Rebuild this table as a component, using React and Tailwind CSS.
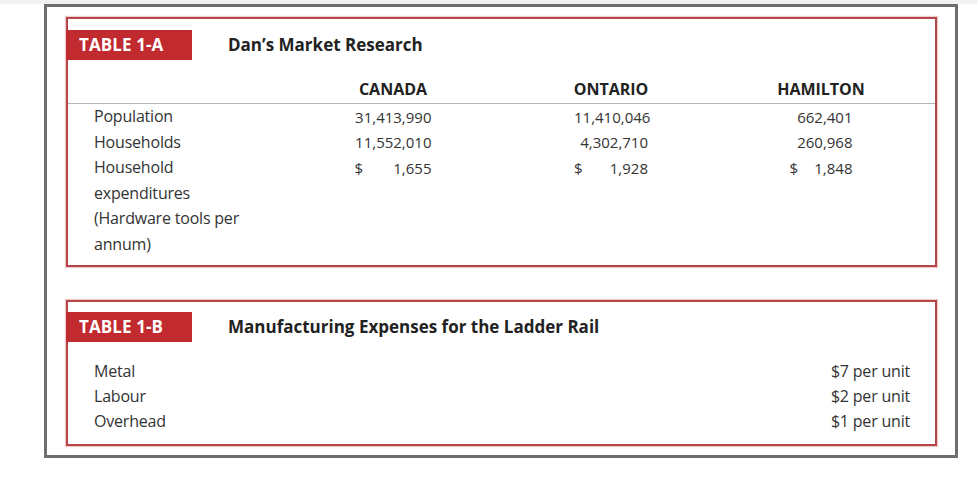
import React from "react";

const canada = [
  { v: "31,413,990" },
  { v: "11,552,010" },
  { d: true, v: "1,655" },
];
const ontario = [
  { v: "11,410,046" },
  { v: "4,302,710" },
  { d: true, v: "1,928" },
];
const hamilton = [
  { v: "662,401" },
  { v: "260,968" },
  { d: true, v: "1,848" },
];

function Badge({ children }) {
  return (
    <div className="-ml-[2px] flex h-[30px] w-[126px] items-center bg-[#c12a2e] pl-[13px] text-[17px] font-bold tracking-[0.1px] text-white">
      {children}
    </div>
  );
}

function ValueCol({ width, boxWidth, items }) {
  return (
    <div className="flex flex-col items-center" style={{ width }}>
      {items.map((it, i) => (
        <div key={i} className="flex h-[25.5px] items-center justify-between" style={{ width: boxWidth }}>
          {it.d ? <span>$</span> : <span />}
          <span>{it.v}</span>
        </div>
      ))}
    </div>
  );
}

export default function App() {
  return (
    <div
      className="h-[485px] w-[977px] overflow-hidden bg-white"
      style={{ fontFamily: "'Open Sans', 'Noto Sans', sans-serif" }}
    >
      <div className="h-[4px] w-full bg-[#f2f2f2]" />
      <div className="ml-[44px] h-[454px] w-[914px] border-[3px] border-[#6e6e6e] bg-white pt-[10px] pl-[19px]">
        {/* Table 1-A */}
        <div className="h-[250px] w-[871px] border-2 border-[#b4464a] shadow-[0_0_1px_1px_rgba(220,140,140,0.45)]">
          <div className="mt-[11px] flex items-center">
            <Badge>TABLE 1-A</Badge>
            <span className="ml-[36px] text-[17px] font-bold text-[#222]">Dan’s Market Research</span>
          </div>

          <div className="mt-[19px] box-content flex h-[20px] items-center border-b border-[#b5b5b5] pb-[4px] text-[16px] font-bold text-[#222]">
            <div className="w-[252px]" />
            <div className="w-[146px] text-center">CANADA</div>
            <div className="w-[290px] text-center">ONTARIO</div>
            <div className="w-[130px] text-center">HAMILTON</div>
          </div>

          <div className="flex text-[15px] text-[#333]">
            <div className="w-[252px] pl-[26px] text-[16px] leading-[25.5px] tracking-[-0.2px]">
              <div>Population</div>
              <div>Households</div>
              <div>Household</div>
              <div>expenditures</div>
              <div>(Hardware tools per</div>
              <div>annum)</div>
            </div>
            <ValueCol width={146} boxWidth={77} items={canada} />
            <ValueCol width={290} boxWidth={74} items={ontario} />
            <ValueCol width={130} boxWidth={63} items={hamilton} />
          </div>
        </div>

        {/* Table 1-B */}
        <div className="mt-[33px] h-[146px] w-[871px] border-2 border-[#b4464a] shadow-[0_0_1px_1px_rgba(220,140,140,0.45)]">
          <div className="mt-[10px] flex items-center">
            <Badge>TABLE 1-B</Badge>
            <span className="ml-[36px] text-[17px] font-bold text-[#222]">
              Manufacturing Expenses for the Ladder Rail
            </span>
          </div>
          <div className="mt-[17px] flex justify-between pl-[26px] pr-[25px] text-[16px] leading-[25px] tracking-[-0.2px] text-[#333]">
            <div>
              <div>Metal</div>
              <div>Labour</div>
              <div>Overhead</div>
            </div>
            <div className="text-right">
              <div>$7 per unit</div>
              <div>$2 per unit</div>
              <div>$1 per unit</div>
            </div>
          </div>
        </div>
      </div>
    </div>
  );
}
